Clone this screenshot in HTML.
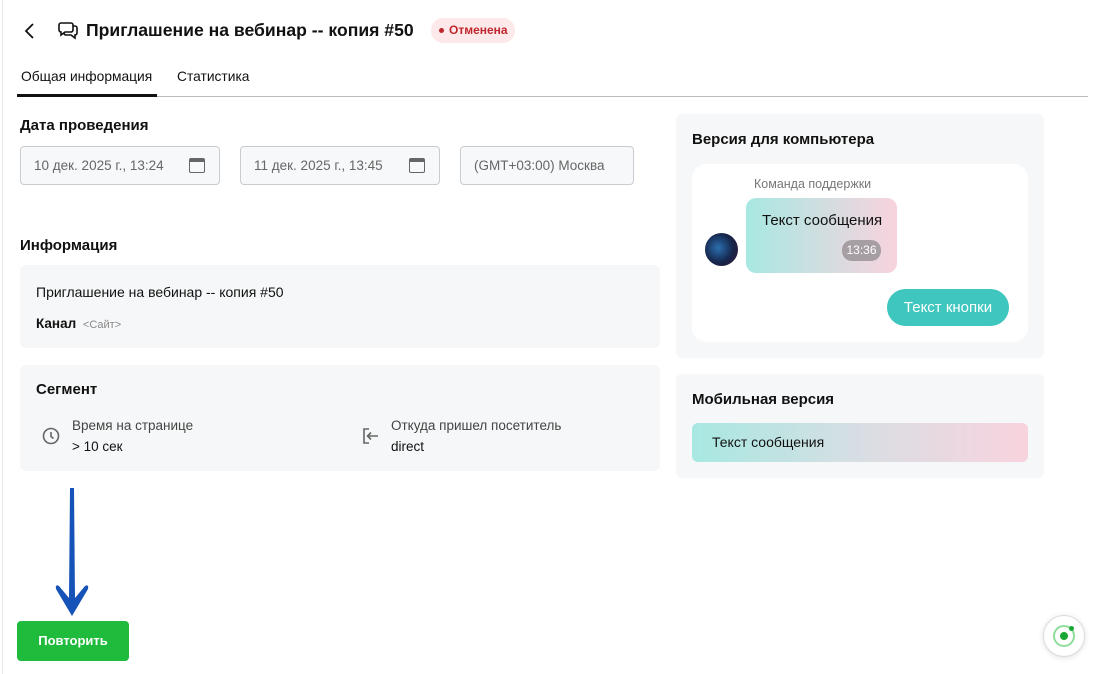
<!DOCTYPE html>
<html><head><meta charset="utf-8"><style>
*{box-sizing:border-box;margin:0;padding:0}
body{width:1101px;height:674px;background:#fff;font-family:"Liberation Sans","DejaVu Sans",sans-serif;color:#111;position:relative;overflow:hidden}
.a{position:absolute}
.border-l{left:2px;top:0;width:1px;height:674px;background:#e6e6e6}
h1{font-size:17.6px;font-weight:bold}
.h2{font-size:15px;font-weight:bold}
.inp{border:1px solid #c9ccd0;border-radius:4px;background:#f7f8f9;font-size:13.5px;color:#666;padding:0 13px;line-height:37px;height:39px}
.panel{background:#f6f7f8;border-radius:6px}
.cal{position:absolute;right:14px;top:11px;width:16px;height:15px;border:1.5px solid #666;border-radius:2px;border-top-width:4px}
</style></head><body>
<div class="a border-l"></div>
<svg class="a" style="left:22px;top:21px" width="16" height="20" viewBox="0 0 16 20"><path d="M11 3 L4 10 L11 17" stroke="#111" stroke-width="1.8" fill="none"/></svg>
<svg class="a" style="left:57px;top:20px" width="22" height="20" viewBox="0 0 22 20"><path d="M4 3 h10 a2 2 0 0 1 2 2 v5 a2 2 0 0 1 -2 2 h-6 l-4 3 v-3 a2 2 0 0 1 -2 -2 v-5 a2 2 0 0 1 2 -2z M16 6 h2 a2 2 0 0 1 2 2 v5 a2 2 0 0 1 -2 2 v3 l-4 -3 h-5 a2 2 0 0 1 -2 -2" stroke="#111" stroke-width="1.6" fill="none"/></svg>
<h1 class="a" style="left:86px;top:20px">Приглашение на вебинар -- копия #50</h1>
<div class="a" style="left:431px;top:18px;width:84px;height:25px;border-radius:12px;background:#fde9e9;color:#c0262d;font-size:12px;font-weight:bold;line-height:25px;padding-left:18px">Отменена</div>
<div class="a" style="left:439px;top:28px;width:5px;height:5px;border-radius:50%;background:#c0262d"></div>
<div class="a" style="left:21px;top:69px;font-size:13.8px">Общая информация</div>
<div class="a" style="left:177px;top:69px;font-size:13.8px">Статистика</div>
<div class="a" style="left:17px;top:96px;width:1071px;height:1px;background:#bbb"></div>
<div class="a" style="left:17px;top:94px;width:140px;height:3px;background:#111"></div>
<div class="a h2" style="left:20px;top:117px">Дата проведения</div>
<div class="a inp" style="left:20px;top:146px;width:200px">10 дек. 2025 г., 13:24<div class="cal"></div></div>
<div class="a inp" style="left:240px;top:146px;width:200px">11 дек. 2025 г., 13:45<div class="cal"></div></div>
<div class="a inp" style="left:460px;top:146px;width:174px">(GMT+03:00) Москва</div>
<div class="a h2" style="left:20px;top:237px">Информация</div>
<div class="a panel" style="left:20px;top:265px;width:640px;height:83px"></div>
<div class="a" style="left:36px;top:284px;font-size:14px">Приглашение на вебинар -- копия #50</div>
<div class="a" style="left:36px;top:316px;font-size:13.5px;font-weight:bold">Канал <span style="font-weight:normal;color:#888;font-size:11px;margin-left:3px">&lt;Сайт&gt;</span></div>
<div class="a panel" style="left:20px;top:365px;width:640px;height:106px"></div>
<div class="a h2" style="left:36px;top:381px">Сегмент</div>
<svg class="a" style="left:41px;top:426px" width="20" height="20" viewBox="0 0 20 20"><circle cx="10" cy="10" r="7.5" stroke="#666" stroke-width="1.6" fill="none"/><path d="M10 6 v4.5 l2.5 2" stroke="#666" stroke-width="1.6" fill="none"/></svg>
<div class="a" style="left:72px;top:418px;font-size:13.5px;color:#444">Время на странице</div>
<div class="a" style="left:72px;top:439px;font-size:13.5px">&gt; 10 сек</div>
<svg class="a" style="left:360px;top:426px" width="22" height="20" viewBox="0 0 22 20"><path d="M9 3 h-5 v14 h5" stroke="#666" stroke-width="1.6" fill="none"/><path d="M18 10 h-10 M11 6.5 l-3.5 3.5 l3.5 3.5" stroke="#666" stroke-width="1.6" fill="none"/></svg>
<div class="a" style="left:391px;top:418px;font-size:13.5px;color:#444">Откуда пришел посетитель</div>
<div class="a" style="left:391px;top:439px;font-size:13.5px">direct</div>
<div class="a panel" style="left:676px;top:114px;width:368px;height:244px"></div>
<div class="a h2" style="left:692px;top:131px">Версия для компьютера</div>
<div class="a" style="left:692px;top:164px;width:336px;height:178px;background:#fff;border-radius:14px"></div>
<div class="a" style="left:754px;top:177px;font-size:12.5px;color:#777">Команда поддержки</div>
<div class="a" style="left:705px;top:233px;width:33px;height:33px;border-radius:50%;background:radial-gradient(circle at 40% 45%,#2a6fb0,#15254a 55%,#3a1630)"></div>
<div class="a" style="left:746px;top:198px;width:151px;height:75px;border-radius:10px;background:linear-gradient(90deg,#a8e8e2,#f8d3de)"></div>
<div class="a" style="left:762px;top:212px;font-size:15px">Текст сообщения</div>
<div class="a" style="left:842px;top:240px;width:39px;height:21px;border-radius:10px;background:#a79ea3;color:#fff;font-size:12px;line-height:21px;text-align:center">13:36</div>
<div class="a" style="left:887px;top:289px;width:122px;height:37px;border-radius:19px;background:#3fc6bf;color:#fff;font-size:15px;line-height:37px;text-align:center">Текст кнопки</div>
<div class="a panel" style="left:676px;top:374px;width:368px;height:104px"></div>
<div class="a h2" style="left:692px;top:391px">Мобильная версия</div>
<div class="a" style="left:692px;top:423px;width:336px;height:39px;border-radius:6px;background:linear-gradient(90deg,#a8e8e2,#dcdde3 55%,#f8d3de);font-size:14px;line-height:39px;padding-left:20px">Текст сообщения</div>
<svg class="a" style="left:52px;top:486px" width="40" height="134" viewBox="0 0 40 134"><path d="M18 2 L22 2 L23 112 L33 100 Q37 98 36 103 L20 130 L4 103 Q3 98 7 100 L17 112 Z" fill="#1553b8"/></svg>
<div class="a" style="left:17px;top:621px;width:112px;height:40px;border-radius:4px;background:#1fbb3c;color:#fff;font-size:13px;font-weight:bold;line-height:40px;text-align:center">Повторить</div>
<div class="a" style="left:1043px;top:615px;width:42px;height:42px;border-radius:50%;background:#fff;border:1px solid #ddd;box-shadow:0 1px 6px rgba(0,0,0,.12)"></div>
<div class="a" style="left:1053px;top:625px;width:22px;height:22px;border-radius:50%;border:2px solid #8fdc9c"></div>
<div class="a" style="left:1060px;top:632px;width:8px;height:8px;border-radius:50%;background:#1aa834"></div>
<div class="a" style="left:1069px;top:626px;width:5px;height:5px;border-radius:50%;background:#1aa834"></div>
</body></html>
